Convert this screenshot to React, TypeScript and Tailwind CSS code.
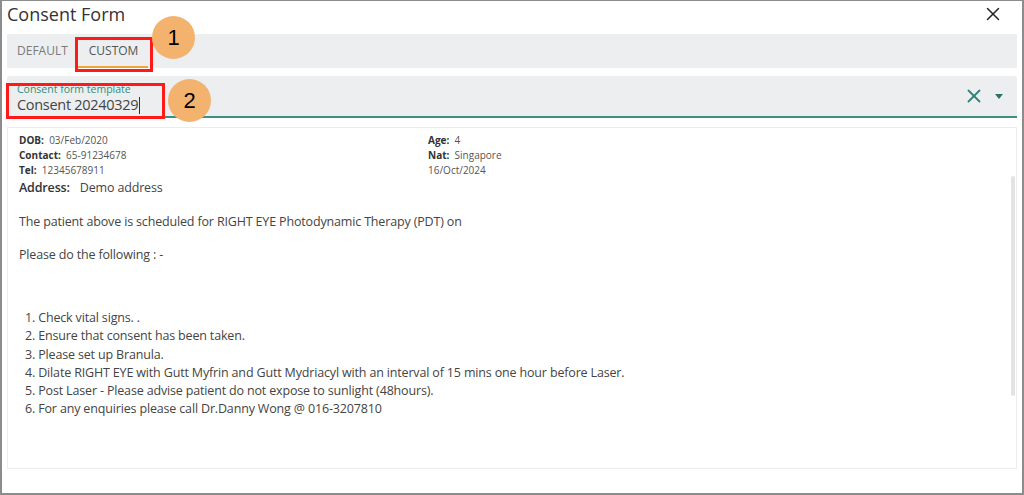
import { X } from 'lucide-react'

const steps = [
  '1. Check vital signs. .',
  '2. Ensure that consent has been taken.',
  '3. Please set up Branula.',
  '4. Dilate RIGHT EYE with Gutt Myfrin and Gutt Mydriacyl with an interval of 15 mins one hour before Laser.',
  '5. Post Laser - Please advise patient do not expose to sunlight (48hours).',
  '6. For any enquiries please call Dr.Danny Wong @ 016-3207810',
]

function Marker({ n }: { n: number }) {
  return (
    <div className="w-[43px] h-[43px] rounded-full bg-[#f4b26f] flex items-center justify-center text-[22px] text-black font-['Liberation_Sans',sans-serif]">
      {n}
    </div>
  )
}

export default function App() {
  return (
    <div className="relative w-[1024px] h-[495px] bg-white border-x-2 border-b-2 border-t border-[#8c8c8c] px-[5px] flex flex-col font-['Open_Sans',sans-serif] text-[#444]">
      {/* header */}
      <div className="h-[33px] flex items-start justify-between">
        <h1 className="text-[18px] leading-[26px] text-[#333]">Consent Form</h1>
        <X size={22} strokeWidth={1.6} className="text-[#222] mr-[13px] mt-[2px]" />
      </div>

      {/* tabs */}
      <div className="h-[34px] bg-[#eceef0] flex items-stretch text-[12px] uppercase">
        <div className="pl-[10px] pr-[8px] flex items-center text-[#7a7a7a]">Default</div>
        <div className="pl-[13px] pr-[10px] flex items-center text-[#555] border-b-2 border-[#f0a33a] pt-[2px]">Custom</div>
      </div>

      {/* template select */}
      <div className="mt-[8px] h-[42px] bg-[#eceef0] border-b-2 border-[#3f8f82] rounded-t-[3px] flex items-center justify-between pl-[10px] pr-[14px]">
        <div className="flex flex-col pt-[5px]">
          <span className="text-[10.5px] leading-[12px] text-[#2f8e7e]">Consent form template</span>
          <span className="text-[14.5px] leading-[20px] tracking-[-0.3px] text-[#444]">
            Consent 20240329<span className="inline-block w-px h-[17px] bg-[#333] align-middle ml-px" />
          </span>
        </div>
        <div className="flex items-center gap-[10px]">
          <X size={22} strokeWidth={2} className="text-[#2f8577]" />
          <svg width="8" height="5" viewBox="0 0 8 5"><path d="M0 0h8L4 5z" fill="#2f6f66" /></svg>
        </div>
      </div>

      {/* content */}
      <div className="relative mt-[9px] h-[342px] border border-[#ececec] px-[11px] pt-[5px] tracking-[-0.16px]">
        <div className="grid grid-cols-[409px_1fr] text-[10px] leading-[15px] text-[#555] tracking-normal">
          <div>
            <p><b className="text-[#333]">DOB:</b>&nbsp; 03/Feb/2020</p>
            <p><b className="text-[#333]">Contact:</b>&nbsp; 65-91234678</p>
            <p><b className="text-[#333]">Tel:</b>&nbsp; 12345678911</p>
          </div>
          <div>
            <p><b className="text-[#333]">Age:</b>&nbsp; 4</p>
            <p><b className="text-[#333]">Nat:</b>&nbsp; Singapore</p>
            <p>16/Oct/2024</p>
          </div>
        </div>
        <p className="text-[12.5px] leading-[19px]">
          <b className="font-semibold text-[#333]">Address:</b>
          <span className="ml-[10px]">Demo address</span>
        </p>
        <p className="text-[12.5px] leading-[19px] mt-[15px]">
          The patient above is scheduled for RIGHT EYE Photodynamic Therapy (PDT) on
        </p>
        <p className="text-[12.5px] leading-[19px] mt-[14px]">Please do the following : -</p>
        <ul className="mt-[45px] ml-[6px] text-[12.5px] leading-[18.3px]">
          {steps.map(s => (
            <li key={s}>{s}</li>
          ))}
        </ul>
        <div className="absolute right-[1px] top-[48px] w-[4px] h-[220px] bg-[#e3e3e3] rounded-sm" />
      </div>

      {/* annotations */}
      <div className="absolute left-[73px] top-[36px] w-[78px] h-[35px] border-[3px] border-[#ff1a1a]" />
      <div className="absolute left-[150px] top-[15px]"><Marker n={1} /></div>
      <div className="absolute left-[4px] top-[82px] w-[159px] h-[36px] border-[3px] border-[#ff1a1a]" />
      <div className="absolute left-[166px] top-[78px]"><Marker n={2} /></div>
    </div>
  )
}
